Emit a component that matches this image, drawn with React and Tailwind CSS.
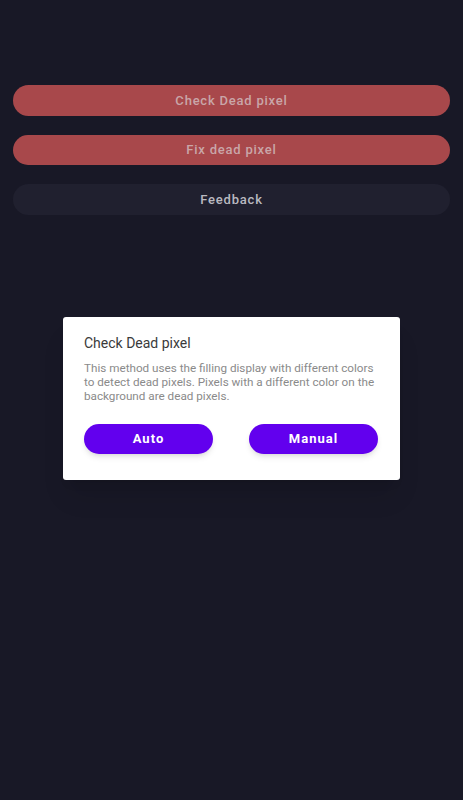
import React from 'react';

const MenuButton = ({ label, variant }) => (
  <button
    className={`w-full h-[30.5px] rounded-full text-[13px] font-medium tracking-[0.06em] flex items-center justify-center ${
      variant === 'red' ? 'bg-[#a8484b] text-[#c9a6a8]' : 'bg-[#20202f] text-[#b9b9c0]'
    }`}
  >
    {label}
  </button>
);

const App = () => {
  return (
    <div className="min-h-screen h-[800px] bg-[#181826] relative" style={{ fontFamily: 'Roboto, "Liberation Sans", sans-serif' }}>
      <div className="flex flex-col gap-[19px] px-[13px] pt-[85px]">
        <MenuButton label="Check Dead pixel" variant="red" />
        <MenuButton label="Fix dead pixel" variant="red" />
        <MenuButton label="Feedback" variant="dark" />
      </div>

      {/* dialog */}
      <div className="absolute inset-0 flex items-center justify-center">
        <div className="w-[337px] bg-white rounded-[3px] shadow-xl pl-[21px] pr-[22px] pt-[16px] pb-[26px] mt-[-3px]">
          <h2 className="text-[14px] leading-[20px] text-[#3a3a3a]">Check Dead pixel</h2>
          <p className="mt-[8px] text-[11.7px] leading-[14px] text-[#8a8a8a]">
            This method uses the filling display with different colors to detect dead pixels. Pixels with a different color on the background are dead pixels.
          </p>
          <div className="flex justify-between mt-[21px]">
            <button className="w-[129px] h-[30px] rounded-full bg-[#6200ee] text-white text-[13px] font-bold tracking-[0.08em] shadow-md">
              Auto
            </button>
            <button className="w-[129px] h-[30px] rounded-full bg-[#6200ee] text-white text-[13px] font-bold tracking-[0.08em] shadow-md">
              Manual
            </button>
          </div>
        </div>
      </div>
    </div>
  );
};

export default App;
